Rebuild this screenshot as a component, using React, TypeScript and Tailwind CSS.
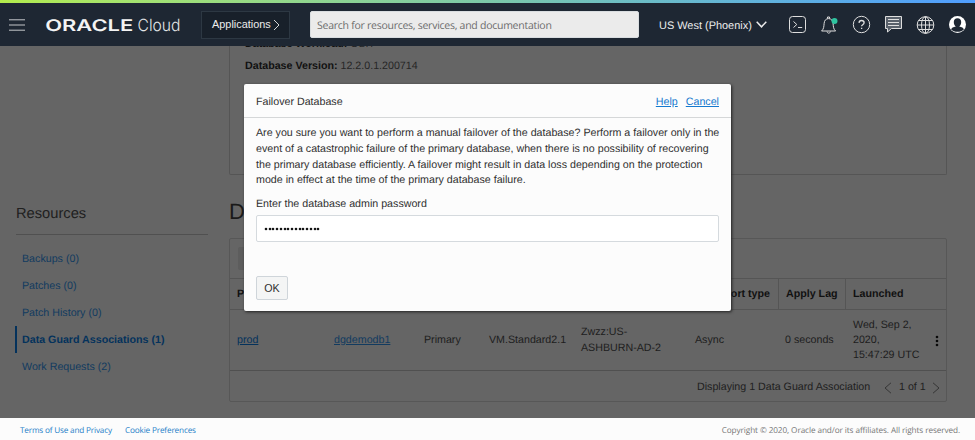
import React from "react";

const resources = ["Backups (0)", "Patches (0)", "Patch History (0)", "Data Guard Associations (1)", "Work Requests (2)"];

function Header() {
  return (
    <header className="relative z-10 h-[46px] shrink-0 bg-[#1e2733] text-[#ececec]">
      <div className="h-[3px] bg-linear-to-r from-[#b3ec4c] via-[#7cc8a8] to-[#509dff]" />
      <div className="flex h-[43px] items-center">
        <svg className="ml-[9px] shrink-0" width="16" height="12" viewBox="0 0 16 12" stroke="#c4c7ca" strokeWidth="1">
          <path d="M0 .8h16M0 6h16M0 11.2h16" />
        </svg>
        <svg className="ml-5 shrink-0" width="137" height="22" viewBox="0 0 137 22" fill="#f4f4f4">
          <text x="0.2" y="17.3" fontFamily="Inter, sans-serif" fontWeight="600" fontSize="16" textLength="88" lengthAdjust="spacingAndGlyphs">ORACLE</text>
          <text x="92.500" y="17.300" fontFamily="Inter, sans-serif" fontWeight="300" fill="#e4e6e8" fontSize="16.800" textLength="43" lengthAdjust="spacingAndGlyphs">Cloud</text>
        </svg>
        <button className="ml-[19px] flex h-7 w-[89px] shrink-0 items-center border border-[#2d3843] bg-[#18202a] pl-[10px] text-[10.9px]">
          <span className="w-[58px] whitespace-nowrap">Applications</span>
          <svg className="ml-[3px]" width="7" height="12" viewBox="0 0 7 12" fill="none" stroke="#d5d5d5"><path d="M1 1l5 5-5 5" /></svg>
        </button>
        <div className="ml-5 flex h-[27px] w-[329px] shrink-0 items-center rounded-[2px] border border-[#d9dde0] bg-[#ebebeb] pt-[4px] pl-[6px] font-['Open_Sans',sans-serif] text-[10.5px] tracking-[-0.26px] whitespace-nowrap text-[#6b6b6b]">
          Search for resources, services, and documentation
        </div>
        <span className="ml-5 w-[94px] shrink-0 pt-[3px] text-[10.95px] whitespace-nowrap">US West (Phoenix)</span>
        <svg className="ml-[3px] shrink-0" width="11" height="7" viewBox="0 0 11 7" fill="none" stroke="#ececec" strokeWidth="1.5"><path d="M.7.8l4.8 5 4.8-5" /></svg>
        <svg className="ml-[21px] shrink-0" width="180" height="20" viewBox="0 0 180 20" fill="none" stroke="#dedede" strokeWidth="1">
          <rect x="1.5" y="1.5" width="16" height="16" rx="3" />
          <path d="M5.500 6.500l3.300 3-3.300 3M10 12.500h4.200" />
          <path d="M33.600 16c2.200-2 2.300-4.500 2.500-7.400.2-3.200 1.900-5 4.500-5s4.300 1.800 4.500 5c.2 2.900.3 5.400 2.500 7.400zM39.500 3.500V2h2v1.500M39 16.500c.4 2.200 3 2.200 3.400 0" />
          <circle cx="46.500" cy="6" r="3" fill="#2ec4a0" stroke="none" />
          <circle cx="73.500" cy="9.500" r="8.200" />
          <path strokeWidth="1.300" d="M71 7.900c.1-1.600 1.100-2.400 2.500-2.400s2.600.8 2.600 2.200c0 1.900-2.500 2-2.500 3.500M73.600 12.700v1.400" />
          <path fill="#59616b" d="M97.500 1.500h16v12h-10l-4 3.500v-3.500h-2z" />
          <path d="M100 4.500h11M100 7.500h11M100 10.500h11" />
          <circle cx="137.500" cy="10" r="8.300" />
          <ellipse cx="137.500" cy="10" rx="4" ry="8.300" />
          <path d="M137.500 1.700v16.600M129.200 10h16.600M130.500 5.500h14M130.500 14.500h14" />
          <circle cx="169.500" cy="9.500" r="8.500" fill="#fff" stroke="none" />
          <path fill="#1e2733" stroke="none" d="M169.500 3.200c2.300 0 3.700 1.700 3.700 3.800 0 2-.8 3.700-2 4.500 2.500.6 4.400 1.400 4.700 2.900-1.700 1.700-3.800 2.400-6.400 2.400s-4.700-.7-6.400-2.400c.3-1.500 2.200-2.300 4.700-2.900-1.200-.8-2-2.500-2-4.500 0-2.100 1.400-3.800 3.700-3.800z" />
        </svg>
      </div>
    </header>
  );
}

function Sidebar() {
  return (
    <aside className="ml-[16px] w-[192px] shrink-0 pt-[156px]">
      <h2 className="h-[33px] border-b border-[#505050] text-[14.7px] leading-[24px] text-[#202020]">Resources</h2>
      <ul className="-ml-px mt-[10px]">
        {resources.map((item, index) => (
          <li
            key={item}
            className={
              index === 3
                ? "h-[27px] border-l-2 border-[#04325c] pl-[5px] text-[10.68px] leading-[28px] font-bold whitespace-nowrap text-[#04325c]"
                : "h-[27px] pl-[7px] text-[10.68px] leading-[28px] text-[#123b60]"
            }
          >
            {item}
          </li>
        ))}
      </ul>
    </aside>
  );
}

function Table() {
  return (
    <div className="h-[164px] rounded-[2px] border border-[#575757] text-[10.68px] leading-[15.3px]">
      <div className="flex h-10 items-center border-b border-[#555] pl-2">
        <div className="h-[23px] w-20 rounded-[2px] bg-[#5d5d5d]" />
      </div>
      <div className="flex h-[31px] items-center border-b border-[#555] font-bold text-[#111]">
        <span className="w-[90px] pt-px pl-[7px]">Peer DB</span>
        <span className="flex-1" />
        <span className="w-[84px] pt-px pr-[8px] text-right whitespace-nowrap">Transport type</span>
        <span className="flex h-full w-[67px] items-center border-l border-[#555] pt-px pl-[7px] whitespace-nowrap">Apply Lag</span>
        <span className="flex h-full w-[101px] items-center border-l border-[#555] pt-px pl-[7px]">Launched</span>
      </div>
      <div className="flex h-[61px] items-center border-b border-[#505050] pt-px pl-[7px] whitespace-nowrap text-[#1d1d1d]">
        <a className="w-[97px] text-[#04325c] underline">prod</a>
        <a className="w-[90px] text-[#123b60] underline">dgdemodb1</a>
        <span className="w-[65px]">Primary</span>
        <span className="w-[92px]">VM.Standard2.1</span>
        <span className="w-[114px]">Zwzz:US-<br />ASHBURN-AD-2</span>
        <span className="w-[90px]">Async</span>
        <span className="w-[68px]">0 seconds</span>
        <span className="w-[82px]">Wed, Sep 2,<br />2020,<br />15:47:29 UTC</span>
        <svg width="4" height="12" viewBox="0 0 4 12" fill="#090909"><circle cx="2" cy="2" r="1.300" /><circle cx="2" cy="6" r="1.300" /><circle cx="2" cy="10" r="1.300" /></svg>
      </div>
      <div className="flex h-[31px] items-center pt-[2px] pl-[467px] whitespace-nowrap text-[#202020]">
        <span className="w-[187px]">Displaying 1 Data Guard Association</span>
        <svg width="8" height="12" viewBox="0 0 8 12" fill="none" stroke="#363636"><path d="M7 .8L1 6l6 5.200" /></svg>
        <span className="ml-[7px] w-[33px]">1 of 1</span>
        <svg width="8" height="12" viewBox="0 0 8 12" fill="none" stroke="#363636"><path d="M1 .8L7 6l-6 5.200" /></svg>
      </div>
    </div>
  );
}

function FailoverDialog() {
  return (
    <section role="dialog" className="absolute top-[84px] left-[244px] z-20 h-[227px] w-[487px] rounded-[2px] bg-[#fcfcfc] text-[10.68px] text-[#303030] shadow-[1px_1px_3px_#222]">
      <div className="flex h-[34px] items-center border-b border-[#d5d7d8] px-3 pt-[3px]">
        <h3 className="flex-1">Failover Database</h3>
        <a className="mr-2 text-[#1579cf] underline">Help</a>
        <a className="text-[#1579cf] underline">Cancel</a>
      </div>
      <div className="px-3 pt-[8px] whitespace-nowrap">
        <p className="leading-[15.800px]">
          Are you sure you want to perform a manual failover of the database? Perform a failover only in the<br />
          event of a catastrophic failure of the primary database, when there is no possibility of recovering<br />
          the primary database efficiently. A failover might result in data loss depending on the protection<br />
          mode in effect at the time of the primary database failure.
        </p>
        <label className="mt-[7px] block leading-4">Enter the database admin password</label>
        <div className="mt-[3px] flex h-[27px] items-center gap-[1.740px] rounded-[2px] border border-[#d5dade] bg-white pl-[8px]">
          {Array.from({ length: 15 }, (_, i) => <span key={i} className="size-[2px] rounded-full bg-[#151515] ring-[0.3px] ring-[#151515]" />)}
        </div>
        <button className="mt-[34px] flex h-6 w-8 items-center justify-center rounded-[2px] border border-[#cfd5da] bg-[#f4f5f5] leading-4">OK</button>
      </div>
    </section>
  );
}

export default function App() {
  return (
    <div className="relative flex h-[440px] w-[975px] flex-col overflow-hidden bg-[#656565] font-['Liberation_Sans',sans-serif] [text-rendering:geometricPrecision]">
      <Header />
      <div className="flex h-[372px] shrink-0">
        <Sidebar />
        <main className="ml-[21px] w-[718px] shrink-0">
          <div className="h-[129px] overflow-hidden rounded-b-[2px] border-x border-b border-[#555] pl-[15px] text-[10.68px] leading-[22px] text-[#252525]">
            <div className="-mt-[13px]"><b className="text-[#111]">Database Workload:</b> OLTP</div>
            <div><b className="text-[#111]">Database Version:</b> 12.2.0.1.200714</div>
          </div>
          <h1 className="h-[63px] pt-[22px] text-[22px] leading-[30px] text-[#1a1a1a]">Data Guard Associations</h1>
          <Table />
        </main>
      </div>
      <footer className="flex h-[22px] shrink-0 items-center bg-[#fcfcfc] pt-[4px] pl-5 font-['Open_Sans',sans-serif] text-[8.200px] tracking-[-0.09px] whitespace-nowrap">
        <a className="w-[105px] tracking-[-0.18px] text-[#2580c8]">Terms of Use and Privacy</a>
        <a className="tracking-[-0.16px] text-[#2580c8]">Cookie Preferences</a>
        <span className="mr-[15px] ml-auto text-[#777]">Copyright © 2020, Oracle and/or its affiliates. All rights reserved.</span>
      </footer>
      <FailoverDialog />
    </div>
  );
}
